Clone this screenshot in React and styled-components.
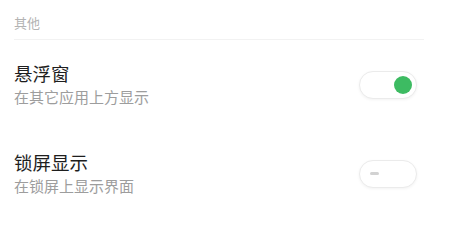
import React, { useState } from 'react';
import styled, { createGlobalStyle } from 'styled-components';

const GlobalStyle = createGlobalStyle`
  body {
    margin: 0;
    background: #ffffff;
    font-family: 'Noto Sans CJK SC', 'Noto Sans', sans-serif;
  }
`;

const Section = styled.div`
  padding-left: 14px;
`;

const Header = styled.div`
  margin-right: 26px;
  padding: 14px 0 7px;
  font-size: 13px;
  line-height: 18px;
  color: #b3b3b3;
  border-bottom: 1px solid #f2f2f2;
`;

const Row = styled.div`
  height: 89px;
  padding-right: 33px;
  display: flex;
  align-items: center;
  justify-content: space-between;
`;

const Texts = styled.div`
  display: flex;
  flex-direction: column;
  gap: 2px;
`;

const Title = styled.div`
  font-size: 18.5px;
  line-height: 23px;
  color: #1e1e1e;
`;

const Subtitle = styled.div`
  font-size: 15px;
  line-height: 20px;
  color: #9d9d9d;
`;

const Toggle = styled.button`
  box-sizing: border-box;
  width: 58px;
  height: 28px;
  padding: 0 ${(p) => (p.$on ? '4px' : '10px')};
  border-radius: 14px;
  border: 1.5px solid #ebebeb;
  background: #ffffff;
  box-shadow: 0 1px 3px rgba(0, 0, 0, 0.05);
  display: flex;
  align-items: center;
  justify-content: ${(p) => (p.$on ? 'flex-end' : 'flex-start')};
  cursor: pointer;
`;

const Knob = styled.span`
  width: 18px;
  height: 18px;
  border-radius: 50%;
  background: #3dbb62;
`;

const Dash = styled.span`
  width: 9px;
  height: 3px;
  border-radius: 1.5px;
  background: #d2d2d2;
`;

const items = [
  { title: '悬浮窗', desc: '在其它应用上方显示', on: true },
  { title: '锁屏显示', desc: '在锁屏上显示界面', on: false },
];

const App = () => {
  const [state, setState] = useState(items.map((i) => i.on));

  const flip = (idx) => {
    setState((s) => s.map((v, i) => (i === idx ? !v : v)));
  };

  return (
    <Section>
      <GlobalStyle />
      <Header>其他</Header>
      {items.map((item, idx) => (
        <Row key={item.title}>
          <Texts>
            <Title>{item.title}</Title>
            <Subtitle>{item.desc}</Subtitle>
          </Texts>
          <Toggle $on={state[idx]} onClick={() => flip(idx)}>
            {state[idx] ? <Knob /> : <Dash />}
          </Toggle>
        </Row>
      ))}
    </Section>
  );
};

export default App;
